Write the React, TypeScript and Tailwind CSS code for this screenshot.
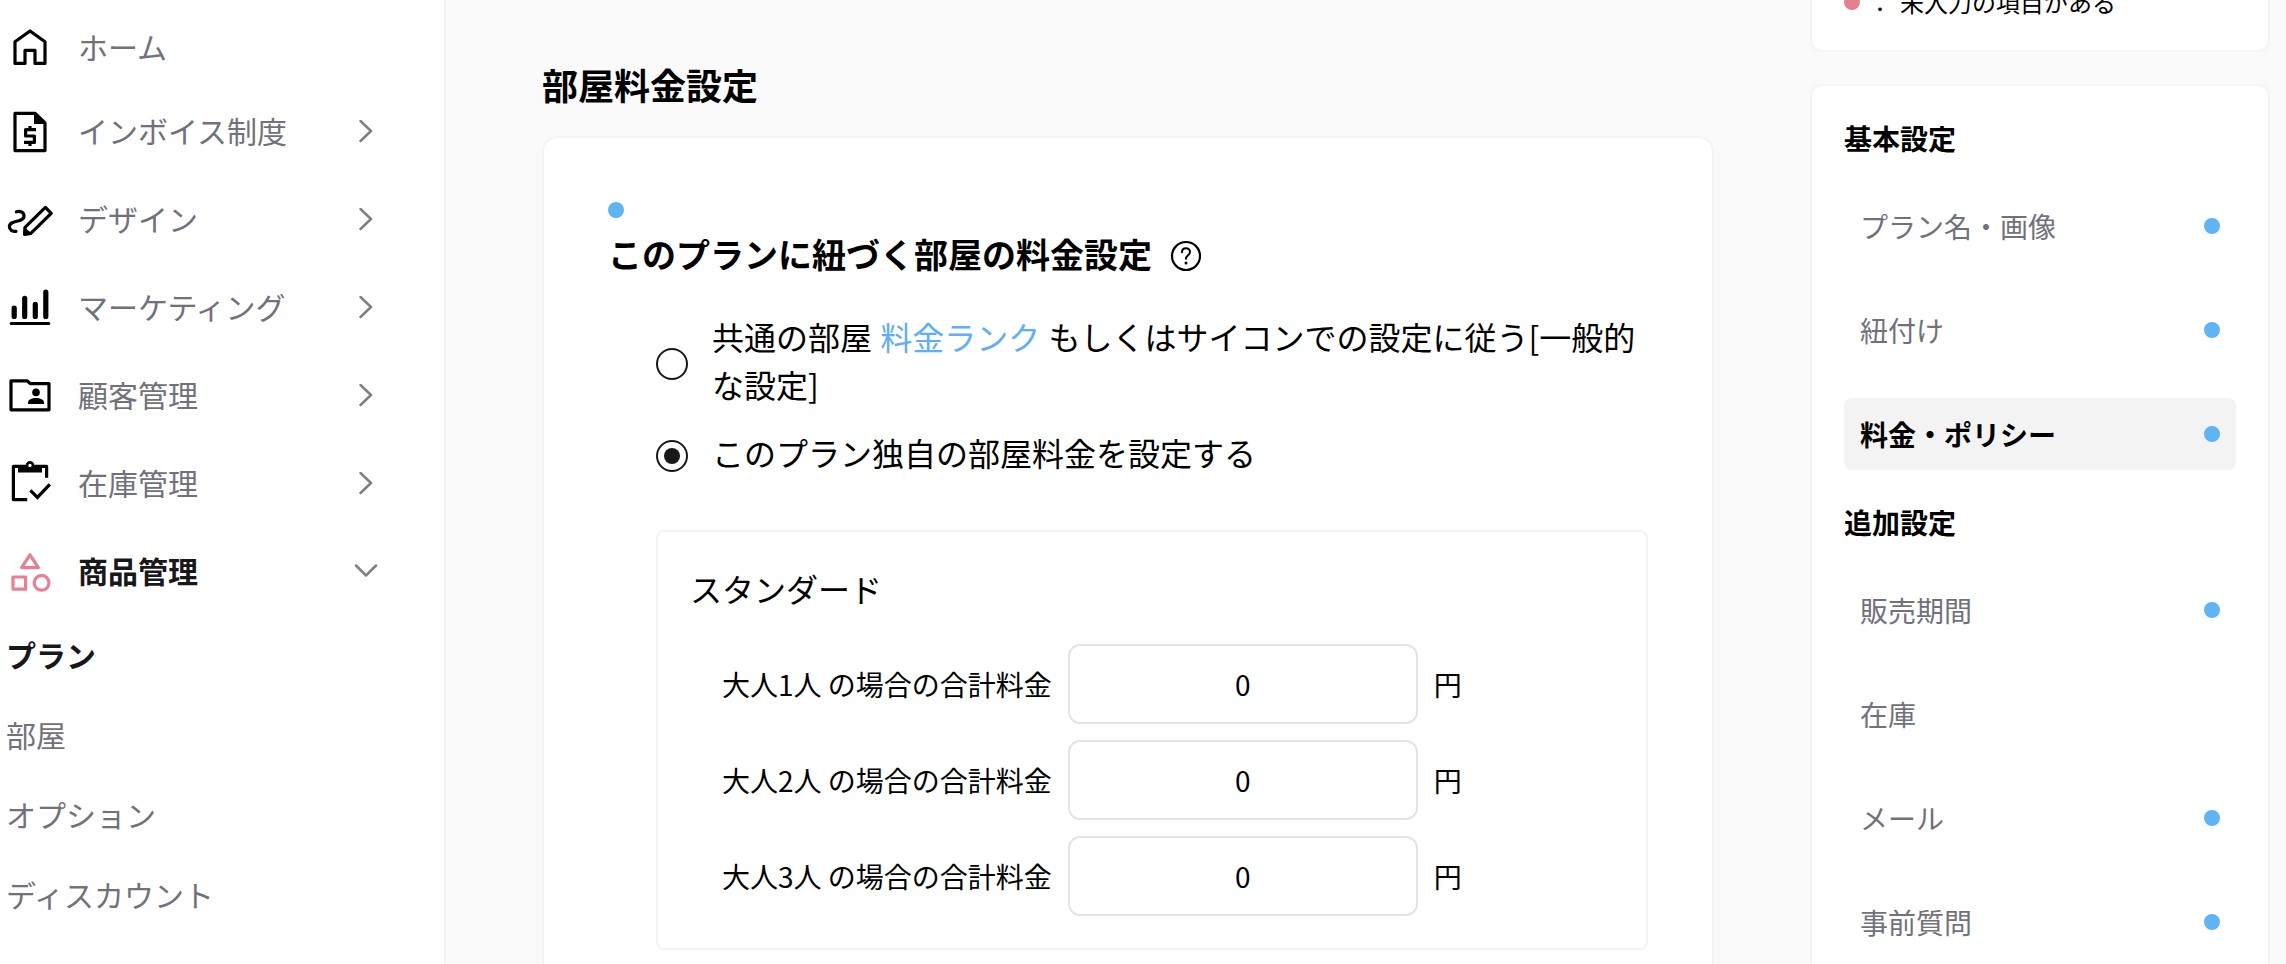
import { useState, type ReactNode } from "react";

type IconProps = { children: ReactNode; className?: string };

function Icon({ children, className = "text-black" }: IconProps) {
  return (
    <svg
      viewBox="0 0 24 24"
      className={`size-12 shrink-0 ${className}`}
      fill="none"
      stroke="currentColor"
      strokeWidth="1.6"
      strokeLinejoin="round"
      aria-hidden="true"
    >
      {children}
    </svg>
  );
}

const HomeIcon = () => (
  <Icon>
    <path d="M4.5 19.7V8.9L12 3.5l7.5 5.4v10.8h-5v-6.5h-5v6.5z" />
  </Icon>
);

const InvoiceIcon = () => (
  <Icon>
    <path d="M14.6 2.7H4.5v18.6h15V7.4z" />
    <path d="M14 2.2V8h6z" fill="currentColor" stroke="none" />
    <path d="M15 10.8H9.8V14h4.4v3.2H9M12 9v1.8M12 17.2V19" />
  </Icon>
);

const DesignIcon = () => (
  <Icon>
    <path d="M5.2 7.9C7 7.4 9 8 9 10c0 3.6-7.3 1.7-7.3 5.4 0 1.5 1.5 2.400 3.300 2.300" strokeLinecap="round" />
    <path d="M9.5 15.7 19.7 5.7l2.900 3-10.200 10-3 .5z" />
    <path d="M9 15.4c-.3 1.400-.5 2.700-.5 4.200 1.600 0 3.100-.1 4.700-.6z" fill="currentColor" stroke="none" />
  </Icon>
);

const MarketingIcon = () => (
  <Icon>
    <path d="M4.1 12.1v4.100M9.350 7.200v9M14.650 10.200v6M19.900 4.100v12.100" strokeWidth="2.6" strokeLinecap="round" />
    <path d="M2.6 19.7h18.800" strokeWidth="1.5" strokeLinecap="round" />
  </Icon>
);

const CustomerIcon = () => (
  <Icon>
    <path d="M2.5 18.9V4.4h8.100l1.500 1.400h9.400v13.100z" />
    <circle cx="15" cy="10.2" r="1.9" fill="currentColor" stroke="none" />
    <path d="M11 16v-.8c0-1.300 2-2.200 4-2.200s4 .9 4 2.200v.8z" fill="currentColor" stroke="none" />
  </Icon>
);

const StockIcon = () => (
  <Icon>
    <path d="M10.6 19.8H3.700V3.200h16.600v5.700" />
    <path d="M6 2.500h4a2.100 2.100 0 0 1 4 0h4v3.800H6z" fill="currentColor" stroke="none" />
    <circle cx="12" cy="2.7" r="1.5" fill="white" strokeWidth="1.3" />
    <path d="m12.200 15.200 3.500 3.500 6.200-6.500" strokeLinejoin="miter" />
  </Icon>
);

const ProductIcon = () => (
  <Icon className="text-[#e88092]">
    <path d="m12 3.400 4.200 6.400H7.800z" />
    <path d="M3.500 14.500h6.300v6.100H3.500z" />
    <circle cx="17.8" cy="17.4" r="3.7" />
  </Icon>
);

function Chevron({ open = false }: { open?: boolean }) {
  return (
    <svg
      viewBox="0 0 24 24"
      className="size-6 shrink-0 text-[#808080]"
      fill="none"
      stroke="currentColor"
      strokeWidth="2.5"
      strokeLinecap="round"
      strokeLinejoin="round"
      aria-hidden="true"
    >
      <path d={open ? "m2 5.500 10 10L22 5.500" : "m6.500 1 10.500 10-10.500 10"} />
    </svg>
  );
}

function HelpIcon() {
  return (
    <svg viewBox="0 0 32 32" className="size-8" fill="none" stroke="currentColor" strokeWidth="2.2" strokeLinecap="round" aria-hidden="true">
      <circle cx="16" cy="16" r="14" />
      <path d="M12 12.200c0-2.600 1.800-4 4-4s4 1.500 4 3.700c0 3.400-4 3.500-4 6.900" strokeWidth="2" />
      <circle cx="16" cy="22.9" r="1.5" fill="currentColor" stroke="none" />
    </svg>
  );
}

const menu = [
  { label: "インボイス制度", icon: <InvoiceIcon /> },
  { label: "デザイン", icon: <DesignIcon /> },
  { label: "マーケティング", icon: <MarketingIcon /> },
  { label: "顧客管理", icon: <CustomerIcon /> },
  { label: "在庫管理", icon: <StockIcon /> },
  { label: "商品管理", icon: <ProductIcon />, open: true },
];

const subMenu = ["プラン", "部屋", "オプション", "ディスカウント"];

function Sidebar() {
  return (
    <nav className="w-[446px] shrink-0 border-r-2 border-zinc-100 bg-white pt-2 pr-[66px] pl-1.5 text-[30px] leading-10 text-zinc-500">
      <a href="#home" className="flex h-20 items-center gap-6">
        <HomeIcon />
        <span className="pb-1">ホーム</span>
      </a>
      {menu.map((item) => (
        <button
          key={item.label}
          type="button"
          aria-expanded={!!item.open}
          className={`flex h-22 w-full items-center gap-6 text-left ${item.open ? "font-bold text-zinc-900" : ""}`}
        >
          {item.icon}
          <span className="flex-1 pb-1">{item.label}</span>
          <Chevron open={item.open} />
        </button>
      ))}
      {subMenu.map((label, i) => (
        <a
          key={label}
          href={`#sub-${i}`}
          className={`flex h-20 items-center pb-1 ${i === 0 ? "font-bold text-zinc-900" : ""}`}
        >
          {label}
        </a>
      ))}
    </nav>
  );
}

const radioClass =
  "grid size-8 shrink-0 appearance-none place-content-center rounded-full border-2 border-zinc-900 bg-white before:size-4 before:rounded-full before:content-[''] checked:before:bg-zinc-900";

function RoomPrices() {
  const [mode, setMode] = useState("own");
  const [prices, setPrices] = useState(["0", "0", "0"]);

  return (
    <main className="min-w-0 flex-1 px-24 pt-14">
      <h1 className="text-4xl leading-14 font-bold">部屋料金設定</h1>
      <section className="mt-6 rounded-2xl border-2 border-zinc-100 bg-white p-16 pb-24">
        <span className="block size-4 rounded-full bg-[#60b4f4]" />
        <div className="mt-2.5 flex items-center gap-[18px]">
          <h2 className="pb-1 text-[34px] leading-[52px] font-bold">このプランに紐づく部屋の料金設定</h2>
          <button type="button" aria-label="ヘルプ">
            <HelpIcon />
          </button>
        </div>
        <div className="mt-7 flex flex-col gap-3 pl-12 text-[32px] leading-12">
          <div className="flex items-center gap-6">
            <input
              id="mode-common"
              type="radio"
              name="mode"
              className={radioClass}
              checked={mode === "common"}
              onChange={() => setMode("common")}
            />
            <label htmlFor="mode-common" className="pb-2">
              共通の部屋{" "}
              <a href="#rank" className="mx-px text-[#60aefa]">
                料金ランク
              </a>{" "}
              もしくはサイコンでの設定に従う[一般的な設定]
            </label>
          </div>
          <div className="flex items-center gap-6">
            <input
              id="mode-own"
              type="radio"
              name="mode"
              className={radioClass}
              checked={mode === "own"}
              onChange={() => setMode("own")}
            />
            <label htmlFor="mode-own" className="pb-2">
              このプラン独自の部屋料金を設定する
            </label>
          </div>
        </div>
        <div className="mt-[46px] ml-12 rounded-lg border-2 border-zinc-100 p-8">
          <h3 className="text-[32px] leading-12">スタンダード</h3>
          <div className="mt-8 flex flex-col gap-4 pl-8 text-[28px]">
            {prices.map((price, i) => (
              <div key={i} className="flex items-center gap-4">
                <label htmlFor={`price-${i}`}>{`大人${i + 1}人 の場合の合計料金`}</label>
                <input
                  id={`price-${i}`}
                  type="text"
                  inputMode="numeric"
                  value={price}
                  onChange={(e) => setPrices(prices.map((p, j) => (j === i ? e.target.value : p)))}
                  className="h-20 w-[350px] rounded-xl border-2 border-[#e4e4e4] bg-white text-center"
                />
                <span>円</span>
              </div>
            ))}
          </div>
        </div>
      </section>
    </main>
  );
}

type Step = { label: string; done?: boolean; current?: boolean };

const groups: { title: string; steps: Step[] }[] = [
  {
    title: "基本設定",
    steps: [
      { label: "プラン名・画像", done: true },
      { label: "紐付け", done: true },
      { label: "料金・ポリシー", done: true, current: true },
    ],
  },
  {
    title: "追加設定",
    steps: [
      { label: "販売期間", done: true },
      { label: "在庫" },
      { label: "メール", done: true },
      { label: "事前質問", done: true },
    ],
  },
];

function StepList() {
  return (
    <aside className="mr-4 w-[460px] shrink-0">
      <div className="-mt-12 rounded-xl border-2 border-zinc-100 bg-white p-8">
        <p className="flex items-center gap-2 text-2xl leading-8">
          <span className="size-4 rounded-full bg-[#e67f90]" />
          <span>：</span>
          <span>未入力の項目がある</span>
        </p>
      </div>
      <div className="mt-8 flex flex-col gap-8 rounded-xl border-2 border-zinc-100 bg-white p-8 text-[28px] leading-10">
        {groups.map((group) => (
          <section key={group.title} className="flex flex-col gap-8">
            <h2 className="font-bold">{group.title}</h2>
            {group.steps.map((step) => (
              <a
                key={step.label}
                href={`#${step.label}`}
                className={`flex h-18 items-center justify-between rounded-lg px-4 ${
                  step.current ? "bg-[#f3f3f3] font-bold" : "text-zinc-500"
                }`}
              >
                {step.label}
                {step.done && <span className="size-4 rounded-full bg-[#60b4f4]" />}
              </a>
            ))}
          </section>
        ))}
      </div>
    </aside>
  );
}

export default function App() {
  return (
    <div lang="ja" className="flex h-screen overflow-hidden bg-[#fafafa] font-['Noto_Sans_CJK_JP',sans-serif] text-black">
      <Sidebar />
      <RoomPrices />
      <StepList />
    </div>
  );
}
